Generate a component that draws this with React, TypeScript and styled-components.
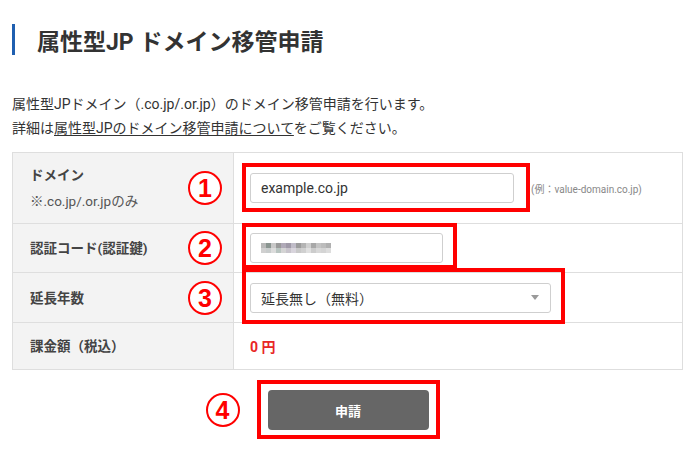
import React from "react";
import styled, { createGlobalStyle } from "styled-components";

const Global = createGlobalStyle`
  html, body { margin: 0; padding: 0; background: #fff; }
  body { font-family: "Roboto", "Noto Sans CJK JP", sans-serif; color: #333; }
  * { box-sizing: border-box; }
`;

const Page = styled.div`
  width: 700px;
  height: 454px;
  padding: 24px 17px 0 12px;
  overflow: hidden;
`;

const Title = styled.h1`
  margin: 0;
  display: flex;
  align-items: center;
  gap: 22px;
  height: 31px;
  font-size: 23px;
  font-weight: 700;
  color: #333;
  &::before {
    content: "";
    width: 3px;
    height: 31px;
    background: #1f5fb0;
  }
`;

const Desc = styled.p`
  margin: 37px 0 12px;
  font-size: 14px;
  line-height: 24px;
  color: #333;
`;

const Link = styled.a`
  color: #333;
  text-decoration: underline;
  text-underline-offset: 2px;
`;

const Table = styled.div`
  border: 1px solid #dedede;
  width: 671px;
`;

const Row = styled.div<{ $h: number }>`
  display: grid;
  grid-template-columns: 221px 1fr;
  height: ${(p) => p.$h}px;
  & + & { border-top: 1px solid #dedede; }
`;

const Label = styled.div`
  position: relative;
  background: #f3f3f3;
  border-right: 1px solid #dedede;
  padding-left: 17px;
  display: flex;
  flex-direction: column;
  justify-content: center;
  font-size: 13.5px;
  line-height: 26px;
  font-weight: 700;
  color: #444;
`;

const Note = styled.span`
  font-weight: 400;
  color: #555;
`;

const Value = styled.div`
  position: relative;
  display: flex;
  align-items: center;
  gap: 17px;
  padding-left: 16px;
`;

const Input = styled.div<{ $w: number }>`
  width: ${(p) => p.$w}px;
  height: 30px;
  border: 1px solid #cfcfcf;
  border-radius: 3px;
  background: #fff;
  display: flex;
  align-items: center;
  padding-left: 10px;
  font-size: 14px;
  color: #333;
`;

const SelectBox = styled(Input)`
  justify-content: space-between;
  padding-right: 11px;
  font-size: 14px;
  &::after {
    content: "";
    border-left: 4px solid transparent;
    border-right: 4px solid transparent;
    border-top: 5px solid #9a9a9a;
  }
`;

const Hint = styled.span`
  font-size: 10px;
  color: #888;
`;

const Price = styled.span`
  font-size: 14px;
  font-weight: 700;
  color: #e82626;
`;

const Mark = styled.span<{ $top: number; $left: number; $w: number; $h: number }>`
  position: absolute;
  top: ${(p) => p.$top}px;
  left: ${(p) => p.$left}px;
  width: ${(p) => p.$w}px;
  height: ${(p) => p.$h}px;
  border: 4px solid #f00;
  pointer-events: none;
  z-index: 2;
`;

const Num = styled.span`
  position: absolute;
  right: 11px;
  top: 50%;
  transform: translateY(-50%);
  width: 34px;
  height: 34px;
  border-radius: 50%;
  border: 2px solid #f00;
  background: #fff;
  color: #f00;
  font-family: "Liberation Sans", "Noto Sans CJK JP", sans-serif;
  font-size: 25px;
  line-height: 30px;
  text-align: center;
  font-weight: 700;
`;

const Actions = styled.div`
  width: 671px;
  display: flex;
  justify-content: center;
  padding-top: 20px;
`;

const BtnWrap = styled.div`
  position: relative;
`;

const Button = styled.button`
  width: 161px;
  height: 40px;
  border: 0;
  border-radius: 4px;
  background: #666;
  color: #fff;
  font-family: "Roboto", "Noto Sans CJK JP", sans-serif;
  font-size: 13px;
  font-weight: 700;
  margin-left: 1px;
`;

const BtnNum = styled(Num)`
  right: auto;
  left: -61px;
`;

const Mosaic = () => {
  const cols = ["#b8b8b8", "#8a9590", "#c8c8c8", "#9a9a9a", "#b0aab8", "#a09aa8", "#c0bcc8", "#9c9c9c", "#b4b4b4", "#d0d0d0", "#a8a8a8", "#c4c4c4", "#bcbcbc", "#b0b0b0"];
  const cols2 = ["#d0d0d0", "#c8cccc", "#dcdcdc", "#b8c4c0", "#d4d4d4", "#c8c4cc", "#d8d4dc", "#c8c8c8", "#d0d0d0", "#e0e0e0", "#cccccc", "#d8d8d8", "#d4d4d4", "#dddddd"];
  return (
    <svg width="70" height="10" viewBox="0 0 70 10">
      {cols.map((c, i) => (
        <rect key={"a" + i} x={i * 5} y={0} width={5} height={5} fill={c} />
      ))}
      {cols2.map((c, i) => (
        <rect key={"b" + i} x={i * 5} y={5} width={5} height={5} fill={c} />
      ))}
    </svg>
  );
};

export default function App() {
  return (
    <>
      <Global />
      <Page>
        <Title>属性型JP ドメイン移管申請</Title>
        <Desc>
          属性型JPドメイン（.co.jp/.or.jp）のドメイン移管申請を行います。
          <br />
          詳細は<Link>属性型JPのドメイン移管申請について</Link>をご覧ください。
        </Desc>
        <Table>
          <Row $h={70}>
            <Label>
              <span>ドメイン</span>
              <Note>※.co.jp/.or.jpのみ</Note>
              <Num>1</Num>
            </Label>
            <Value>
              <Input $w={264}>example.co.jp</Input>
              <Hint>(例：value-domain.co.jp)</Hint>
              <Mark $top={10} $left={8} $w={288} $h={49} />
            </Value>
          </Row>
          <Row $h={49}>
            <Label>
              <span>認証コード(認証鍵)</span>
              <Num>2</Num>
            </Label>
            <Value>
              <Input $w={193}>
                <Mosaic />
              </Input>
              <Mark $top={-1} $left={8} $w={215} $h={46} />
            </Value>
          </Row>
          <Row $h={50}>
            <Label>
              <span>延長年数</span>
              <Num>3</Num>
            </Label>
            <Value>
              <SelectBox $w={301}>延長無し（無料）</SelectBox>
              <Mark $top={-5} $left={8} $w={323} $h={56} />
            </Value>
          </Row>
          <Row $h={47}>
            <Label>
              <span>課金額（税込）</span>
            </Label>
            <Value>
              <Price>0 円</Price>
            </Value>
          </Row>
        </Table>
        <Actions>
          <BtnWrap>
            <BtnNum>4</BtnNum>
            <Button>申請</Button>
            <Mark $top={-10} $left={-10} $w={183} $h={59} />
          </BtnWrap>
        </Actions>
      </Page>
    </>
  );
}
